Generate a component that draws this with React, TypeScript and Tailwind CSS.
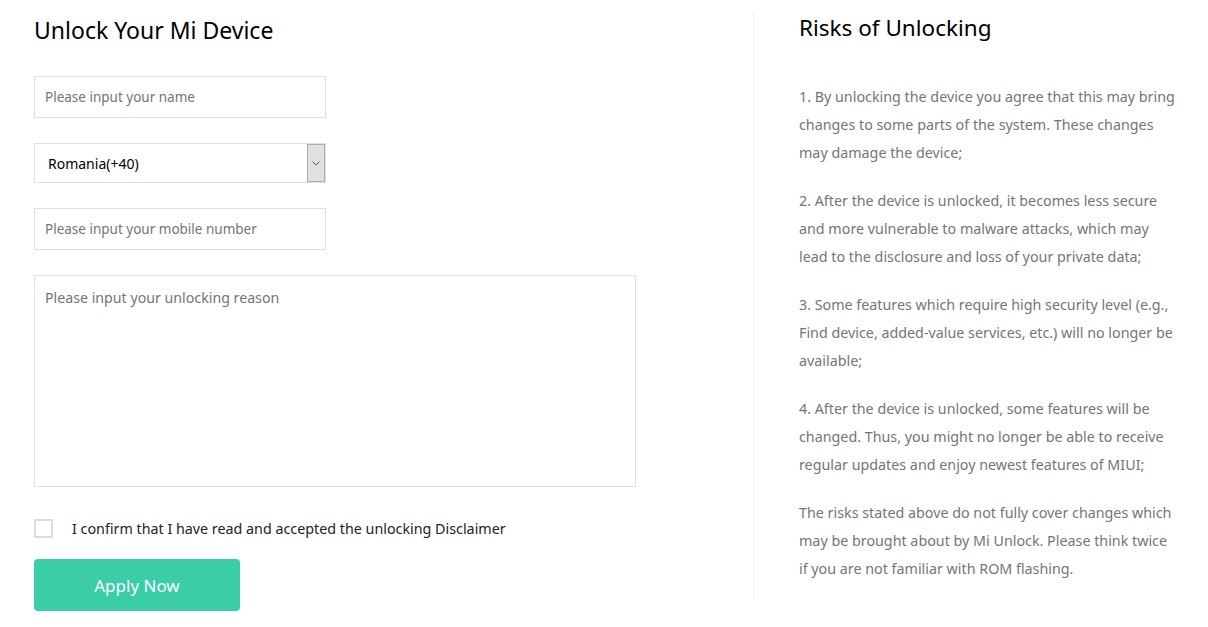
import React from "react";

const paras = [
  "1. By unlocking the device you agree that this may bring changes to some parts of the system. These changes may damage the device;",
  "2. After the device is unlocked, it becomes less secure and more vulnerable to malware attacks, which may lead to the disclosure and loss of your private data;",
  "3. Some features which require high security level (e.g., Find device, added-value services, etc.) will no longer be available;",
  "4. After the device is unlocked, some features will be changed. Thus, you might no longer be able to receive regular updates and enjoy newest features of MIUI;",
  "The risks stated above do not fully cover changes which may be brought about by Mi Unlock. Please think twice if you are not familiar with ROM flashing.",
];

export default function App() {
  return (
    <div
      className="flex w-[1208px] h-[627px] bg-white"
      style={{ fontFamily: '"Noto Sans", sans-serif' }}
    >
      <div className="ml-[34px] w-[602px] pt-[14px]">
        <h1 className="text-[23px] leading-[32px] text-black">Unlock Your Mi Device</h1>
        <div className="mt-[30px] w-[292px] h-[42px] border border-[#e0e0e0] flex items-center px-[10px] text-[13.5px] text-[#757575]">
          Please input your name
        </div>
        <div className="mt-[25px] w-[292px] h-[40px] border border-[#e0e0e0] flex items-center">
          <span className="flex-1 pl-[13px] text-[14px] text-black">Romania(+40)</span>
          <div className="w-[18px] h-[38px] bg-[#e1e1e1] border border-[#adadad] flex items-center justify-center">
            <svg width="8" height="5" viewBox="0 0 8 5">
              <path d="M0.5 0.5 L4 4 L7.5 0.5" fill="none" stroke="#555" strokeWidth="1" />
            </svg>
          </div>
        </div>
        <div className="mt-[25px] w-[292px] h-[42px] border border-[#e0e0e0] flex items-center px-[10px] text-[13.5px] text-[#757575]">
          Please input your mobile number
        </div>
        <div className="mt-[25px] w-[602px] h-[212px] border border-[#e0e0e0] px-[10px] pt-[11px] text-[14.2px] text-[#757575]">
          Please input your unlocking reason
        </div>
        <div className="mt-[31px] flex items-center">
          <div className="w-[19px] h-[19px] border-2 border-[#dcdcdc] bg-white" />
          <span className="ml-[19px] text-[14.3px] text-[#222]">
            I confirm that I have read and accepted the unlocking Disclaimer
          </span>
        </div>
        <div className="mt-[20px] w-[206px] h-[52px] rounded-[4px] bg-[#3bcca8] flex items-center justify-center text-white text-[17px]">
          Apply Now
        </div>
      </div>
      <div className="ml-[117px] mt-[12px] h-[588px] w-px bg-[#eeeeee]" />
      <div className="ml-[45px] w-[380px] pt-[12px]">
        <h2 className="text-[22.5px] leading-[32px] text-black">Risks of Unlocking</h2>
        <div className="mt-[39px] flex flex-col gap-[20px]">
          {paras.map((p, i) => (
            <p key={i} className="text-[14.3px] leading-[28px] text-[#757575]">
              {p}
            </p>
          ))}
        </div>
      </div>
    </div>
  );
}
